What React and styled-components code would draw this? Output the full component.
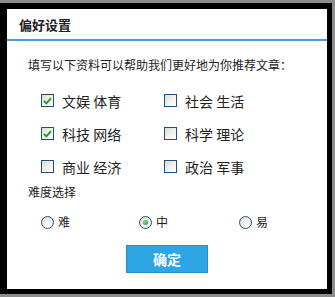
import styled, { createGlobalStyle } from "styled-components";

const GlobalStyle = createGlobalStyle`
  html, body {
    margin: 0;
    padding: 0;
    background: #8c8c8c;
    width: 335px;
    height: 297px;
    overflow: hidden;
  }
  body {
    font-family: "Noto Sans CJK SC", "Noto Sans", sans-serif;
    color: #222;
  }
`;

const Frame = styled.div`
  margin-top: 3px;
  width: 332px;
  height: 291px;
  box-sizing: border-box;
  background: #000;
  padding: 6px 5px 5px 7px;
`;

const Panel = styled.div`
  background: #fff;
  height: 100%;
  display: flex;
  flex-direction: column;
`;

const Header = styled.div`
  height: 30px;
  border-bottom: 2px solid #46a4cc;
  display: flex;
  align-items: center;
  padding-left: 12px;
`;

const Title = styled.h3`
  margin: 0;
  font-size: 13px;
  font-weight: bold;
  color: #222;
`;

const Intro = styled.p`
  margin: 14px 0 0 21px;
  font-size: 12px;
  line-height: 20px;
`;

const TopicGrid = styled.div`
  margin-top: 9px;
  padding-left: 34px;
  display: grid;
  grid-template-columns: 123px 123px;
  grid-auto-rows: 33px;
`;

const Option = styled.label`
  display: flex;
  align-items: center;
  gap: ${({ gap }) => gap}px;
  font-size: ${({ size }) => size}px;
  line-height: 1;
`;

const Box = styled.span`
  width: 13px;
  height: 13px;
  box-sizing: border-box;
  border: 1px solid #1f4f7a;
  background: linear-gradient(135deg, #dcdcd6 0%, #f2f2ee 55%, #ffffff 100%);
  display: flex;
  align-items: center;
  justify-content: center;
`;

const SectionLabel = styled.div`
  margin-left: 21px;
  font-size: 12px;
  line-height: 18px;
`;

const RadioRow = styled.div`
  margin-top: 11px;
  padding-left: 34px;
  display: flex;
  height: 20px;
`;

const RadioItem = styled(Option)`
  width: ${({ w }) => w}px;
`;

const Ring = styled.span`
  width: 13px;
  height: 13px;
  box-sizing: border-box;
  border-radius: 50%;
  border: 1px solid #2e5077;
  background: radial-gradient(circle at 65% 70%, #ffffff 0%, #f0f0ec 45%, #cfcfc8 100%);
  display: flex;
  align-items: center;
  justify-content: center;
`;

const Dot = styled.span`
  width: 5px;
  height: 5px;
  border-radius: 50%;
  background: radial-gradient(circle at 40% 40%, #8de08d 0%, #2ea62e 70%);
`;

const Footer = styled.div`
  margin-top: 13px;
  display: flex;
  justify-content: center;
`;

const Button = styled.button`
  width: 82px;
  height: 28px;
  border: 1px solid #2a8fc9;
  background: #2ea6e3;
  color: #fff;
  font-family: "Noto Sans CJK SC", sans-serif;
  font-size: 14px;
  font-weight: bold;
  padding: 0;
  cursor: pointer;
`;

const Check = () => (
  <svg width="9" height="8" viewBox="0 0 9 8">
    <path d="M1 4 L3.4 6.4 L8 1.2" fill="none" stroke="#21a121" strokeWidth="2" />
  </svg>
);

const topics = [
  { label: "文娱 体育", checked: true },
  { label: "社会 生活", checked: false },
  { label: "科技 网络", checked: true },
  { label: "科学 理论", checked: false },
  { label: "商业 经济", checked: false },
  { label: "政治 军事", checked: false },
];

const levels = [
  { label: "难", checked: false, w: 98 },
  { label: "中", checked: true, w: 100 },
  { label: "易", checked: false, w: 60 },
];

const App = () => (
  <>
    <GlobalStyle />
    <Frame>
      <Panel>
        <Header>
          <Title>偏好设置</Title>
        </Header>
        <Intro>填写以下资料可以帮助我们更好地为你推荐文章：</Intro>
        <TopicGrid>
          {topics.map((t) => (
            <Option key={t.label} gap={8} size={14}>
              <Box>{t.checked && <Check />}</Box>
              {t.label}
            </Option>
          ))}
        </TopicGrid>
        <SectionLabel>难度选择</SectionLabel>
        <RadioRow>
          {levels.map((l) => (
            <RadioItem key={l.label} gap={4} size={12} w={l.w}>
              <Ring>{l.checked && <Dot />}</Ring>
              {l.label}
            </RadioItem>
          ))}
        </RadioRow>
        <Footer>
          <Button>确定</Button>
        </Footer>
      </Panel>
    </Frame>
  </>
);

export default App;
